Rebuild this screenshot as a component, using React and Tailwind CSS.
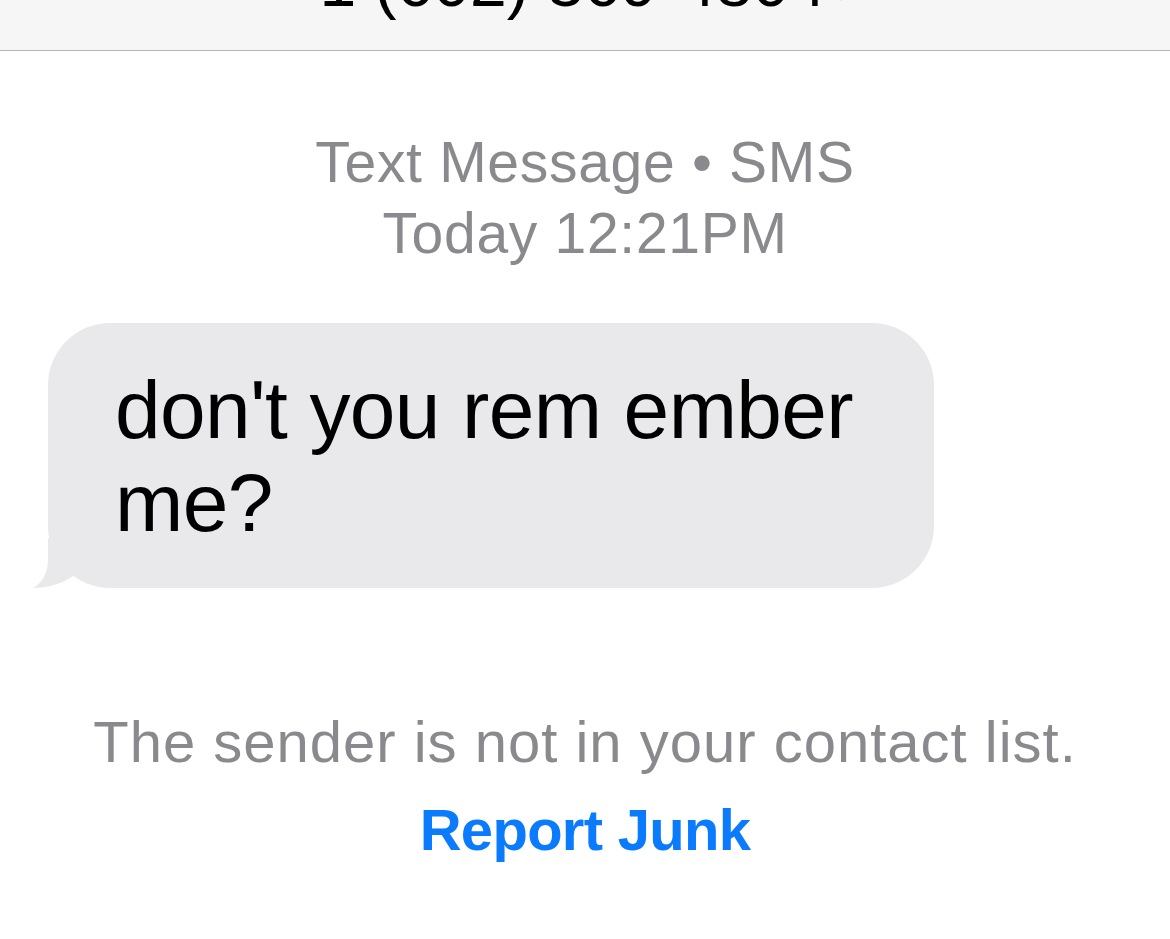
import React from "react";

function Tail() {
  return (
    <svg className="absolute left-[-15px] bottom-0" width="60" height="60" viewBox="0 0 60 60">
      <path d="M15 10 L15 30 C15 46 9 55 0 60 C17 60 32 55 47 43 L47 10 Z" fill="#e9e9eb" />
    </svg>
  );
}

export default function App() {
  return (
    <div
      className="w-[1170px] h-[939px] bg-white overflow-hidden"
      style={{ fontFamily: "'Liberation Sans', Arial, sans-serif" }}
    >
      <div className="h-[51px] bg-[#f6f6f6] border-b border-[#b4b4b4] overflow-hidden flex justify-center items-start">
        <div className="flex items-start mt-[-50px] ml-[-31px]">
          <span className="text-[66px] leading-[66px] text-black">+1 (602) 369-4804</span>
          <svg className="mt-[18px] ml-[12px]" width="20" height="34" viewBox="0 0 20 34">
            <path d="M3 3 L16 17 L3 31" fill="none" stroke="#c4c4c7" strokeWidth="3" strokeLinecap="round" strokeLinejoin="round" />
          </svg>
        </div>
      </div>

      <div className="mt-[76px] flex flex-col items-center text-[#8a8a8e] text-[57px] leading-[71px] tracking-[0.7px]">
        <div>Text Message • SMS</div>
        <div>Today 12:21PM</div>
      </div>

      <div className="mt-[54px] ml-[48px] relative w-[886px]">
        <Tail />
        <div className="relative bg-[#e9e9eb] rounded-[62px] pl-[67px] pr-[30px] pt-[40px] pb-[39px] text-black text-[82px] leading-[93px] tracking-[-0.6px]">
          <div className="whitespace-nowrap">don't you rem ember</div>
          <div>me?</div>
        </div>
      </div>

      <div className="mt-[110px] flex flex-col items-center text-[58px] leading-[88px]">
        <div className="text-[#8a8a8e] tracking-[1px] whitespace-nowrap">The sender is not in your contact list.</div>
        <div className="text-[#0b7bfe] font-bold tracking-[-0.7px]">Report Junk</div>
      </div>
    </div>
  );
}
